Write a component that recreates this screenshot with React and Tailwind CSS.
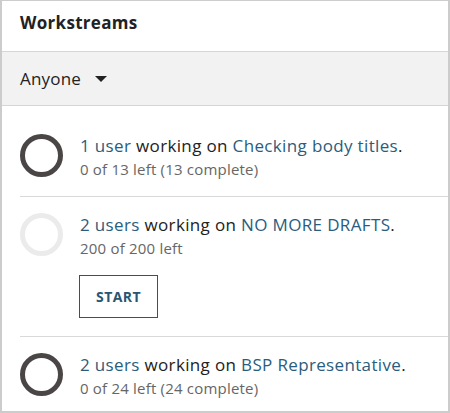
import React from 'react';

const font = { fontFamily: '"Open Sans", "Noto Sans", sans-serif' };

const workstreams = [
  { users: '1 user', name: 'Checking body titles', sub: '0 of 13 left (13 complete)', done: true },
  { users: '2 users', name: 'NO MORE DRAFTS', sub: '200 of 200 left', done: false, start: true },
  { users: '2 users', name: 'BSP Representative', sub: '0 of 24 left (24 complete)', done: true },
];

function Ring({ done }) {
  return (
    <div
      className={
        'h-[43px] w-[43px] shrink-0 rounded-full border-[5px] ' +
        (done ? 'border-[#4a4646]' : 'border-[#ebebeb]')
      }
    />
  );
}

function Item({ ws, last }) {
  return (
    <div
      className={
        'flex shrink-0 items-start gap-[17px] pt-[16px] pb-[16px] ' +
        (last ? '' : 'border-b border-[#d9d9d9]')
      }
    >
      <Ring done={ws.done} />
      <div className="flex flex-col">
        <p className="text-[17px] leading-[24px] tracking-[0.35px] text-[#222]">
          <span className="text-[#2a5d7d]">{ws.users}</span> working on{' '}
          <span className="text-[#2a5d7d]">{ws.name}</span>.
        </p>
        <p className="text-[15px] leading-[22px] tracking-[0.2px] text-[#666]">{ws.sub}</p>
        {ws.start && (
          <button className="mt-[16px] mb-[2px] -ml-[1px] h-[43px] w-[79px] border border-[#2a5672] text-[14px] font-bold tracking-[0.4px] text-[#2a5672]">
            START
          </button>
        )}
      </div>
    </div>
  );
}

export default function App() {
  return (
    <div className="h-[413px] w-[450px] overflow-hidden bg-white" style={font}>
      <div className="flex h-full flex-col overflow-hidden border-x-2 border-t border-b-2 border-[#cccccc]">
        <div className="h-[51px] shrink-0 border-b border-[#d6d6d6] pl-[18px] pt-[10px]">
          <h2 className="text-[17px] font-bold leading-[24px] tracking-[0.3px] text-[#222]">Workstreams</h2>
        </div>
        <div className="flex h-[54px] shrink-0 items-center gap-[14px] border-b border-[#d6d6d6] bg-[#f2f2f2] pl-[18px]">
          <span className="text-[17px] leading-[24px] tracking-[0.2px] text-[#222]">Anyone</span>
          <svg width="12" height="6" viewBox="0 0 12 6">
            <path d="M0 0h12L6 6z" fill="#222" />
          </svg>
        </div>
        <div className="flex shrink-0 flex-col pl-[18px] pt-[12px]">
          {workstreams.map((ws, i) => (
            <Item key={i} ws={ws} last={i === workstreams.length - 1} />
          ))}
        </div>
      </div>
    </div>
  );
}
